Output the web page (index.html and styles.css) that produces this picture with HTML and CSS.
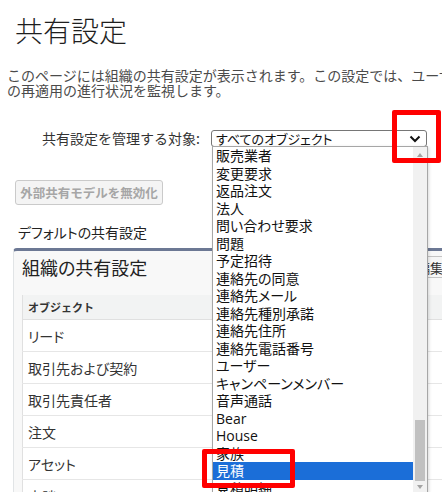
FILE: index.html
```html
<!DOCTYPE html>
<html lang="ja">
<head>
    <meta charset="UTF-8">
    <meta name="viewport" content="width=device-width, initial-scale=1.0">
    <title>共有設定</title>
    <link rel="stylesheet" href="styles.css">
</head>
<body>

<div class="page">
    <h1 class="page-title">共有設定</h1>
    <p class="intro">このページには組織の共有設定が表示されます。この設定では、ユーザーの共有ルール<br>の再適用の進行状況を監視します。</p>

    <div class="target-row">
        <label class="target-label">共有設定を管理する対象:</label>
        <div class="fake-select">
            <span>すべてのオブジェクト</span>
            <svg class="chevron" width="12" height="8" viewBox="0 0 12 8"><path d="M1.5 1.5 L6 6 L10.5 1.5" fill="none" stroke="#111" stroke-width="2"/></svg>
        </div>

        <!-- open dropdown list -->
        <div class="dropdown">
            <ul class="options">
                <li>販売業者</li>
                <li>変更要求</li>
                <li>返品注文</li>
                <li>法人</li>
                <li>問い合わせ要求</li>
                <li>問題</li>
                <li>予定招待</li>
                <li>連絡先の同意</li>
                <li>連絡先メール</li>
                <li>連絡先種別承諾</li>
                <li>連絡先住所</li>
                <li>連絡先電話番号</li>
                <li>ユーザー</li>
                <li>キャンペーンメンバー</li>
                <li>音声通話</li>
                <li class="latin">Bear</li>
                <li class="latin">House</li>
                <li>家族</li>
                <li class="selected">見積</li>
                <li>見積明細</li>
            </ul>
            <div class="scrollbar">
                <div class="sb-up"><span class="arrow-up"></span></div>
                <div class="sb-track"><div class="sb-thumb"></div></div>
                <div class="sb-down"><span class="arrow-down"></span></div>
            </div>
        </div>
    </div>

    <button class="btn-disabled" disabled>外部共有モデルを無効化</button>

    <div class="section-title">デフォルトの共有設定</div>

    <div class="panel">
        <div class="panel-head">
            <h2>組織の共有設定</h2>
            <button class="btn">編集</button>
        </div>
        <table class="grid">
            <tr><th>オブジェクト</th></tr>
            <tr><td>リード</td></tr>
            <tr><td>取引先および契約</td></tr>
            <tr><td>取引先責任者</td></tr>
            <tr><td>注文</td></tr>
            <tr><td>アセット</td></tr>
            <tr><td>商談</td></tr>
        </table>
    </div>

    <!-- annotation boxes -->
    <div class="mark mark-select"></div>
    <div class="mark mark-item"></div>
</div>

</body>
</html>
```

FILE: styles.css
```css
html, body {
    margin: 0;
    overflow: hidden;
}
body {
    font-family: "Noto Sans CJK JP", "Noto Sans", sans-serif;
    color: #333;
    background-color: #fff;
    width: 442px;
    height: 492px;
}
.page {
    position: relative;
}
.page-title {
    margin: 0;
    padding: 14px 0 0 15px;
    font-size: 28px;
    line-height: 32px;
    font-weight: 300;
    color: #1e1e1e;
}
.intro {
    margin: 22px 0 0 7px;
    font-size: 14px;
    line-height: 15px;
    white-space: nowrap;
    color: #4b4b4b;
}
.target-row {
    position: relative;
    display: flex;
    gap: 11px;
    margin-top: 32px;
    height: 17px;
}
.target-label {
    width: 200px;
    text-align: right;
    font-size: 14px;
    line-height: 17px;
    color: #333;
}
.fake-select {
    width: 216px;
    height: 17px;
    box-sizing: border-box;
    border: 1px solid #767676;
    border-radius: 3px;
    padding: 0 5px 0 4px;
    display: flex;
    align-items: center;
    justify-content: space-between;
    font-size: 13px;
    line-height: 15px;
    font-feature-settings: "palt";
    color: #111;
}
.dropdown {
    position: absolute;
    left: 212px;
    top: 16px;
    width: 216px;
    height: 347px;
    box-sizing: border-box;
    border: 1px solid #a6a6a6;
    background-color: #fff;
    display: flex;
    box-shadow: 1px 1px 3px rgba(0, 0, 0, 0.15);
    z-index: 2;
}
.options {
    flex: 1;
    margin: 0;
    padding: 0;
    list-style: none;
    font-size: 14px;
    line-height: 17.5px;
    font-feature-settings: "palt";
    color: #111;
}
.options li {
    padding-left: 3px;
    height: 17.5px;
    white-space: nowrap;
}
.options li.latin {
    font-family: "Open Sans", "Noto Sans", sans-serif;
    color: #111;
}
.options li.selected {
    background-color: #1b6ed8;
    color: #fff;
}
.scrollbar {
    width: 14px;
    background-color: #f1f1f1;
    display: flex;
    flex-direction: column;
}
.sb-up {
    height: 16px;
    display: flex;
    align-items: center;
    justify-content: center;
}
.sb-track {
    flex: 1;
    display: flex;
    flex-direction: column;
    justify-content: flex-end;
}
.sb-thumb {
    height: 61px;
    margin: 0 2px;
    background-color: #c1c1c1;
}
.sb-down {
    height: 11px;
    display: flex;
    align-items: center;
    justify-content: center;
}
.arrow-up {
    border-left: 3.5px solid transparent;
    border-right: 3.5px solid transparent;
    border-bottom: 4px solid #a3a3a3;
}
.arrow-down {
    border-left: 3.5px solid transparent;
    border-right: 3.5px solid transparent;
    border-top: 4px solid #a3a3a3;
}
.btn-disabled {
    display: block;
    margin: 33px 0 0 15px;
    width: 148px;
    height: 25px;
    padding: 0;
    border: 1px solid #cacaca;
    border-radius: 3px;
    background-color: #f4f4f4;
    color: #a6a6a6;
    font-family: inherit;
    font-size: 12.5px;
    font-weight: bold;
}
.section-title {
    margin: 19px 0 0 18px;
    font-size: 14px;
    line-height: 16px;
    font-feature-settings: "palt";
    color: #222;
}
.panel {
    margin: 8px 0 0 13px;
    width: 447px;
    border-top: 3px solid #6c7894;
    border-left: 1px solid #e1e4e6;
    border-radius: 4px 0 0 0;
    background-color: #f8f8f8;
    height: 260px;
}
.panel-head {
    display: flex;
    justify-content: space-between;
    align-items: center;
    padding: 5px 9px 17px 8px;
}
.panel-head h2 {
    margin: 0;
    font-size: 18px;
    line-height: 22px;
    font-weight: normal;
    font-feature-settings: "palt";
    color: #222;
}
.btn {
    height: 22px;
    padding: 0 8px;
    border: 1px solid #c4c4c4;
    border-radius: 3px;
    background-color: #f6f6f6;
    font-family: inherit;
    font-size: 13px;
    color: #333;
}
.grid {
    margin-left: 8px;
    width: 429px;
    border-collapse: collapse;
    background-color: #fff;
    border-left: 1px solid #e0e0e0;
}
.grid th {
    height: 24px;
    padding: 0 0 0 5px;
    text-align: left;
    font-size: 11px;
    font-weight: bold;
    background-color: #f2f3f3;
    border-bottom: 1px solid #e0e0e0;
    color: #333;
}
.grid td {
    height: 31px;
    padding: 0 0 0 5px;
    font-size: 14px;
    font-feature-settings: "palt";
    border-bottom: 1px solid #e6e6e6;
    color: #333;
}
.mark {
    position: absolute;
    box-sizing: border-box;
    border: 5px solid #f00;
    border-radius: 2px;
    z-index: 3;
}
.mark-select {
    left: 392px;
    top: 110px;
    width: 49px;
    height: 53px;
}
.mark-item {
    left: 202px;
    top: 449px;
    width: 93px;
    height: 39px;
}
```
